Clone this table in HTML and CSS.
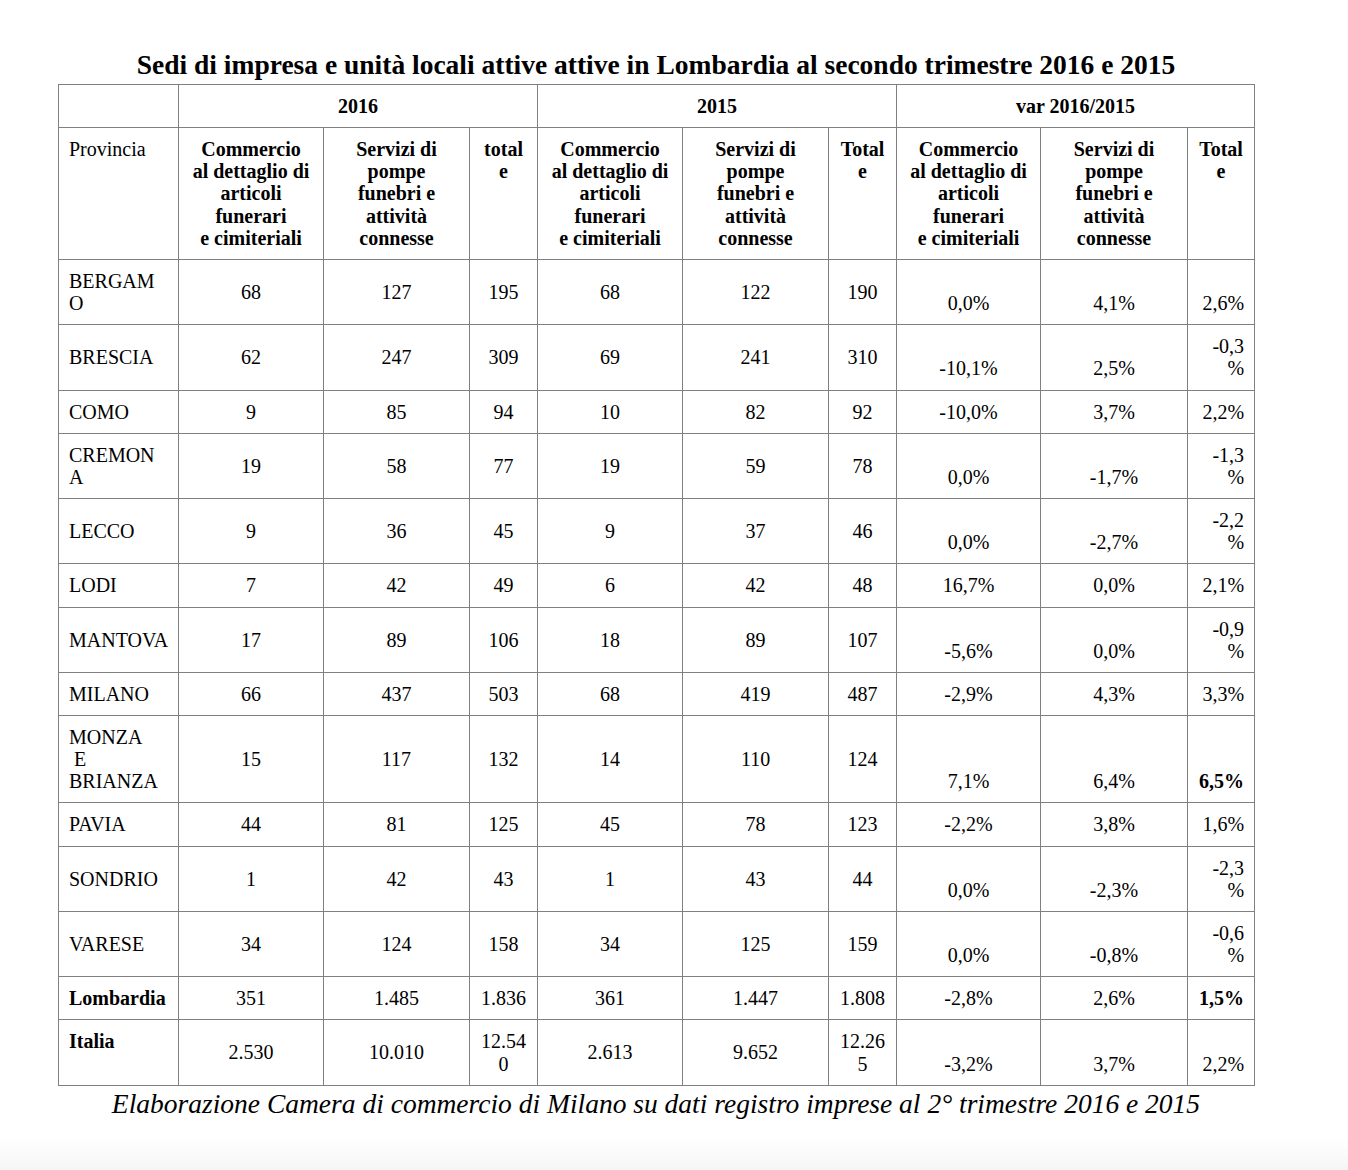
FILE: index.html
```html
<!DOCTYPE html>
<html lang="it">
<head>
<meta charset="utf-8">
<title>Sedi di impresa</title>
<link rel="stylesheet" href="styles.css">
</head>
<body>
<div class="page">
  <h1 class="title">Sedi di impresa e unità locali attive attive in Lombardia al secondo trimestre 2016 e 2015</h1>
  <table class="data">
    <colgroup>
      <col class="c-prov"><col class="c-a"><col class="c-b"><col class="c-t">
      <col class="c-a"><col class="c-b"><col class="c-t">
      <col class="c-va"><col class="c-vb"><col class="c-vt">
    </colgroup>
    <thead>
      <tr class="h1">
        <th></th>
        <th colspan="3">2016</th>
        <th colspan="3">2015</th>
        <th colspan="3">var 2016/2015</th>
      </tr>
      <tr class="h2">
        <th class="prov-h">Provincia</th>
        <th>Commercio<br>al dettaglio di<br>articoli<br>funerari<br>e cimiteriali</th>
        <th>Servizi di<br>pompe<br>funebri e<br>attività<br>connesse</th>
        <th>total<br>e</th>
        <th>Commercio<br>al dettaglio di<br>articoli<br>funerari<br>e cimiteriali</th>
        <th>Servizi di<br>pompe<br>funebri e<br>attività<br>connesse</th>
        <th>Total<br>e</th>
        <th>Commercio<br>al dettaglio di<br>articoli<br>funerari<br>e cimiteriali</th>
        <th>Servizi di<br>pompe<br>funebri e<br>attività<br>connesse</th>
        <th>Total<br>e</th>
      </tr>
    </thead>
    <tbody>
      <tr><td class="prov">BERGAM<br>O</td><td>68</td><td>127</td><td>195</td><td>68</td><td>122</td><td>190</td><td class="v">0,0%</td><td class="v">4,1%</td><td class="vt">2,6%</td></tr>
      <tr><td class="prov">BRESCIA</td><td>62</td><td>247</td><td>309</td><td>69</td><td>241</td><td>310</td><td class="v">-10,1%</td><td class="v">2,5%</td><td class="vt">-0,3<br>%</td></tr>
      <tr><td class="prov">COMO</td><td>9</td><td>85</td><td>94</td><td>10</td><td>82</td><td>92</td><td class="v">-10,0%</td><td class="v">3,7%</td><td class="vt">2,2%</td></tr>
      <tr><td class="prov">CREMON<br>A</td><td>19</td><td>58</td><td>77</td><td>19</td><td>59</td><td>78</td><td class="v">0,0%</td><td class="v">-1,7%</td><td class="vt">-1,3<br>%</td></tr>
      <tr><td class="prov">LECCO</td><td>9</td><td>36</td><td>45</td><td>9</td><td>37</td><td>46</td><td class="v">0,0%</td><td class="v">-2,7%</td><td class="vt">-2,2<br>%</td></tr>
      <tr><td class="prov">LODI</td><td>7</td><td>42</td><td>49</td><td>6</td><td>42</td><td>48</td><td class="v">16,7%</td><td class="v">0,0%</td><td class="vt">2,1%</td></tr>
      <tr><td class="prov">MANTOVA</td><td>17</td><td>89</td><td>106</td><td>18</td><td>89</td><td>107</td><td class="v">-5,6%</td><td class="v">0,0%</td><td class="vt">-0,9<br>%</td></tr>
      <tr><td class="prov">MILANO</td><td>66</td><td>437</td><td>503</td><td>68</td><td>419</td><td>487</td><td class="v">-2,9%</td><td class="v">4,3%</td><td class="vt">3,3%</td></tr>
      <tr><td class="prov">MONZA<br>&nbsp;E<br>BRIANZA</td><td>15</td><td>117</td><td>132</td><td>14</td><td>110</td><td>124</td><td class="v">7,1%</td><td class="v">6,4%</td><td class="vt b">6,5%</td></tr>
      <tr><td class="prov">PAVIA</td><td>44</td><td>81</td><td>125</td><td>45</td><td>78</td><td>123</td><td class="v">-2,2%</td><td class="v">3,8%</td><td class="vt">1,6%</td></tr>
      <tr><td class="prov">SONDRIO</td><td>1</td><td>42</td><td>43</td><td>1</td><td>43</td><td>44</td><td class="v">0,0%</td><td class="v">-2,3%</td><td class="vt">-2,3<br>%</td></tr>
      <tr><td class="prov">VARESE</td><td>34</td><td>124</td><td>158</td><td>34</td><td>125</td><td>159</td><td class="v">0,0%</td><td class="v">-0,8%</td><td class="vt">-0,6<br>%</td></tr>
      <tr><td class="prov b">Lombardia</td><td>351</td><td>1.485</td><td>1.836</td><td>361</td><td>1.447</td><td>1.808</td><td class="v">-2,8%</td><td class="v">2,6%</td><td class="vt b">1,5%</td></tr>
      <tr><td class="prov b top">Italia</td><td>2.530</td><td>10.010</td><td>12.54<br>0</td><td>2.613</td><td>9.652</td><td>12.26<br>5</td><td class="v">-3,2%</td><td class="v">3,7%</td><td class="vt">2,2%</td></tr>
    </tbody>
  </table>
  <p class="note">Elaborazione Camera di commercio di Milano su dati registro imprese al 2° trimestre 2016 e 2015</p>
</div>
</body>
</html>
```

FILE: styles.css
```css
html, body {
  margin: 0;
  padding: 0;
}
body {
  background: linear-gradient(to bottom, #ffffff 0, #ffffff 1138px, #f5f5f5 1170px);
  min-height: 1170px;
  font-family: "Liberation Serif", "Times New Roman", serif;
  color: #000;
}
.page {
  width: 1196px;
  margin-left: 58px;
  padding-top: 49px;
}
.title {
  margin: 0 0 3px 0;
  font-size: 27.5px;
  line-height: 32px;
  font-weight: bold;
  text-align: center;
}
.data {
  width: 1197px;
  border-collapse: collapse;
  table-layout: fixed;
  font-size: 20px;
  line-height: 22.15px;
}
.c-prov { width: 120px; }
.c-a { width: 145px; }
.c-b { width: 146px; }
.c-t { width: 68px; }
.c-va { width: 144px; }
.c-vb { width: 147px; }
.c-vt { width: 67px; }
.data th, .data td {
  border: 1px solid #808080;
  padding: 10px 10px;
  text-align: center;
  vertical-align: middle;
}
.data th {
  font-weight: bold;
}
.h2 th {
  vertical-align: top;
}
.h2 .prov-h {
  font-weight: normal;
  text-align: left;
}
.data td.prov {
  text-align: left;
}
.data td.v {
  vertical-align: bottom;
}
.data td.vt {
  vertical-align: bottom;
  text-align: right;
}
.data td.top {
  vertical-align: top;
}
.b {
  font-weight: bold;
}
.note {
  margin: 2px 0 0 0;
  font-style: italic;
  font-size: 27.5px;
  line-height: 32px;
  text-align: center;
}
```
